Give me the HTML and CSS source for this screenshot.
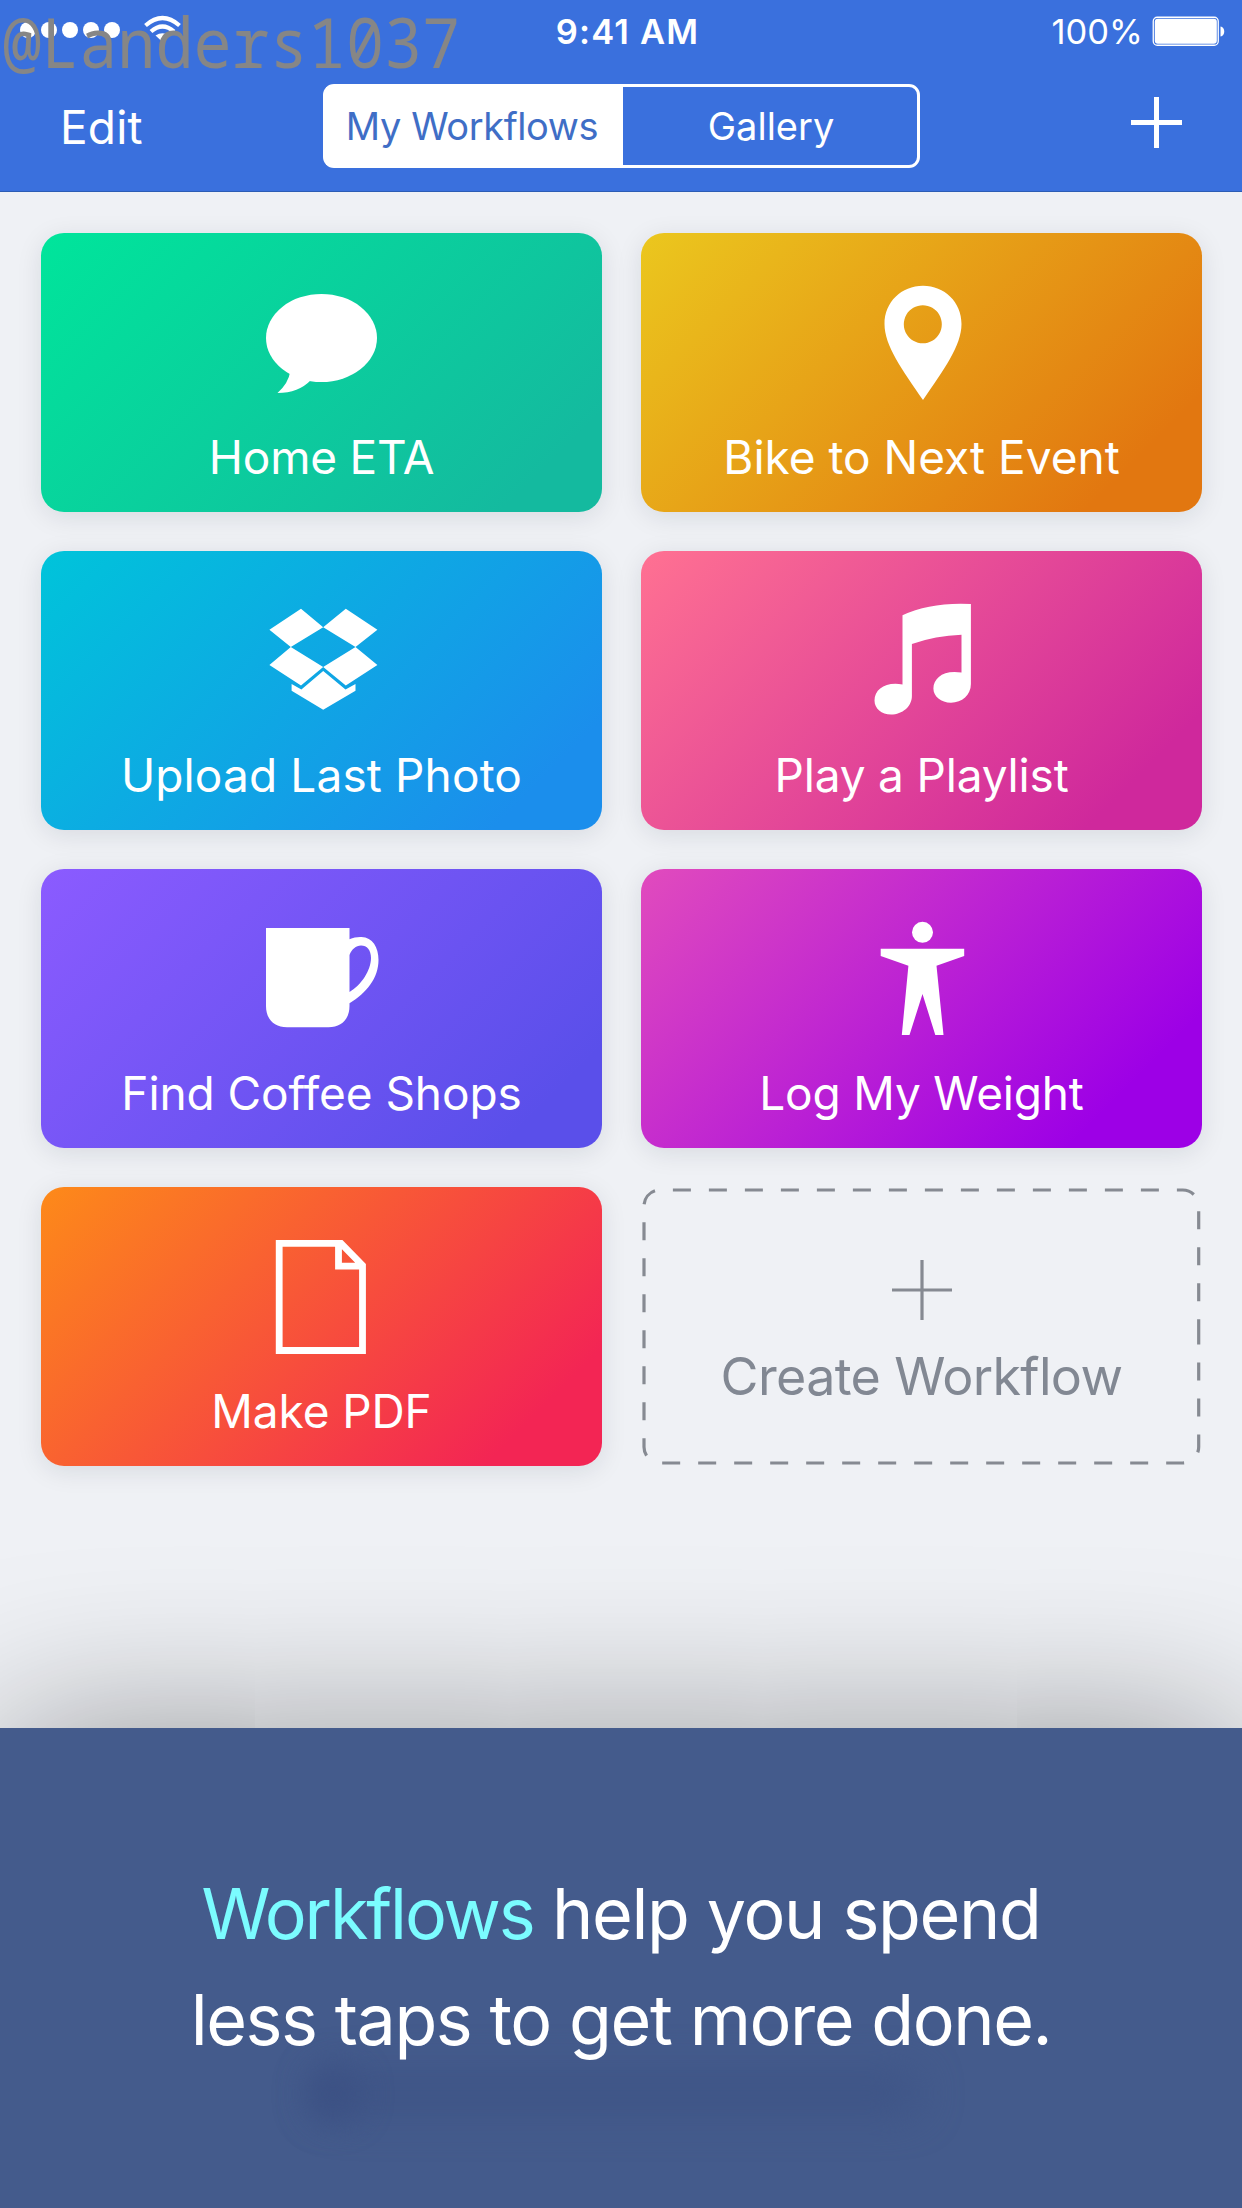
FILE: index.html
```html
<!DOCTYPE html>
<html lang="en">
<head>
<meta charset="utf-8">
<title>My Workflows</title>
<link rel="stylesheet" href="styles.css">
</head>
<body>
<div class="screen">
  <header class="header">
    <div class="status">
      <svg class="signal" viewBox="0 0 200 62" width="200" height="62">
        <g fill="#fff">
          <circle cx="28" cy="30" r="8"/><circle cx="49" cy="30" r="8"/><circle cx="70" cy="30" r="8"/><circle cx="91" cy="30" r="8"/><circle cx="112" cy="30" r="8"/>
          <path d="M162.500 42 L155.500 35.500 Q162.500 31 169.500 35.500 Z"/>
        </g>
        <g fill="none" stroke="#fff" stroke-width="4.200">
          <path d="M145.500 25.500 Q162.500 10.500 179.500 25.500"/>
          <path d="M151 31.500 Q162.500 21.500 174 31.500"/>
        </g>
      </svg>
      <span class="time">9:41 AM</span>
      <div class="power">
        <span class="percent">100%</span>
        <svg viewBox="0 0 75 31" width="75" height="31">
          <rect x="1.250" y="1.250" width="65" height="28" rx="4" fill="none" stroke="#fff" stroke-width="1.300"/>
          <rect x="2.800" y="2.800" width="62" height="25" rx="3" fill="#fff"/>
          <path d="M68.500 10.500 C73.500 11 73.500 20 68.500 20.500 Z" fill="#fff"/>
        </svg>
      </div>
    </div>
    <nav class="nav">
      <span class="edit">Edit</span>
      <div class="segments">
        <span class="segment selected">My Workflows</span>
        <span class="segment gallery">Gallery</span>
      </div>
      <svg class="add" viewBox="0 0 51 51" width="51" height="51"><path d="M0 25.500H51M25.500 0V51" stroke="#fff" stroke-width="5"/></svg>
    </nav>
    <div class="handle">@Landers1037</div>
  </header>

  <main class="grid">
    <div class="card green">
      <svg class="icon" viewBox="256.500 273 130 140">
        <ellipse cx="321" cy="338" rx="55.500" ry="44"/>
        <path d="M289.600 372 Q288 383 277 393 Q298 393 310.500 380 L306 370 Z"/>
      </svg>
      <span class="label home">Home ETA</span>
    </div>
    <div class="card amber">
      <svg class="icon" viewBox="856.500 273 130 140">
        <path fill-rule="evenodd" d="M922.500 285.700 C944 285.700 961 302 961 324 C961 346 943 370 922.500 400 C902 370 884 346 884 324 C884 302 901 285.700 922.500 285.700 Z M922.300 305.300 a19 19 0 1 0 .01 0 Z"/>
      </svg>
      <span class="label">Bike to Next Event</span>
    </div>
    <div class="card blue">
      <svg class="icon" viewBox="256.500 591 130 140">
        <path d="M268.900 629.700 L300.500 608.700 L322.700 627.300 L290.300 647 Z M345.300 608.700 L376.900 629.700 L355 647 L322.700 627.300 Z M290.300 647 L322.700 667 L300.500 685.500 L268.900 665 Z M355 647 L376.900 665 L345.300 685.500 L322.700 667 Z M291.100 684 L300.900 689.500 L322.700 671 L345 689.500 L355 684 V690.700 L322.700 709.700 L291.100 690.700 Z"/>
      </svg>
      <span class="label upload">Upload Last Photo</span>
    </div>
    <div class="card pink">
      <svg class="icon" viewBox="856.500 591 130 140">
        <path d="M902 615.300 Q930 602 970.400 604 V684 C970.400 695 961.500 702.700 950.500 702.700 C940.500 702.700 932.900 696.500 932.900 688.500 C932.900 678 943 669.500 961 672.500 V634.700 Q935 635.500 911.400 644 V696 C911.400 706.500 902 714.500 890.500 714.500 C881 714.500 874 708.500 874 700.500 C874 689 885.500 681.500 902 684.500 Z"/>
      </svg>
      <span class="label play">Play a Playlist</span>
    </div>
    <div class="card violet">
      <svg class="icon" viewBox="256.500 909 130 140">
        <path d="M265.500 928 H349 V939.300 C353 937.500 357 936.800 361 937 C372 937.500 378 947 378 960 C378 978 366 993 349 1003.300 V1006 C349 1019 341 1027.300 328 1027.300 H286.500 C273.500 1027.300 265.500 1019 265.500 1006 Z M349 955 V992 C361 985 370.500 970 370.500 958 C370.500 950 366.500 945.500 360.500 945.500 C355.500 945.500 351 949.500 349 955 Z"/>
      </svg>
      <span class="label find">Find Coffee Shops</span>
    </div>
    <div class="card purple">
      <svg class="icon" viewBox="856.500 909 130 140">
        <circle cx="922" cy="932.300" r="10.500"/>
        <path d="M880.200 948.700 H963.700 V956 L936 965.700 L943 1035 H934.800 L922 994 L909 1035 H901.300 L907.900 965.700 L880.200 956 Z"/>
      </svg>
      <span class="label play">Log My Weight</span>
    </div>
    <div class="card red">
      <svg class="icon outline" viewBox="256.500 1227 130 140">
        <path d="M278.700 1243.300 H340.500 L362 1265.500 V1350.500 H278.700 Z M338 1243.300 V1266.200 H362"/>
      </svg>
      <span class="label find">Make PDF</span>
    </div>
    <div class="create">
      <svg class="frame" viewBox="641 1187 561 279"><path d="M1198.700 1326.500 V1447 a16 16 0 0 1 -16 16 H660 a16 16 0 0 1 -16 -16 V1206 a16 16 0 0 1 16 -16 H1182.700 a16 16 0 0 1 16 16 Z"/></svg>
      <svg class="plus" viewBox="0 0 60 60"><path d="M0 30H60M30 0V60"/></svg>
      <span class="create-label">Create Workflow</span>
    </div>
  </main>

  <section class="panel">
    <div class="smudge"></div>
    <div class="smudge spot"></div>
    <p class="message"><span class="accent">Workflows</span> help you spend<br><span class="second">less taps to get more done.</span></p>
  </section>
</div>
</body>
</html>
```
FILE: styles.css
```css
* { box-sizing: border-box; margin: 0; padding: 0; }

body {
  background: #eff1f5;
  font-family: Inter, "Liberation Sans", sans-serif;
  color: #fff;
}

svg { display: block; }

.screen {
  display: flex;
  flex-direction: column;
  width: 1242px;
  height: 2208px;
  overflow: hidden;
  background: #eff1f5;
}

.header {
  position: relative;
  flex: none;
  height: 192px;
  background: #3a70dd;
  border-bottom: 1px solid #2c5cb4;
}

.status {
  display: grid;
  grid-template-columns: 1fr auto 1fr;
  align-items: center;
  height: 62px;
  padding-right: 15px;
}

.time {
  padding-left: 28px;
  font-size: 34.5px;
  font-weight: 600;
  letter-spacing: 1.2px;
}

.power {
  display: flex;
  justify-content: flex-end;
  align-items: center;
  gap: 9px;
}

.percent {
  font-size: 34.5px;
  letter-spacing: 0;
}

.nav {
  display: grid;
  grid-template-columns: 1fr 597px 1fr;
  align-items: start;
  padding: 22px 60px 0;
}

.edit {
  padding-top: 15px;
  font-size: 46px;
  line-height: 56px;
  letter-spacing: 0.2px;
}

.segments {
  display: grid;
  grid-template-columns: 297px 1fr;
  height: 84px;
  border: 3px solid #fff;
  border-radius: 11px;
}

.segment {
  font-size: 38px;
  line-height: 78px;
  letter-spacing: -0.4px;
  text-align: center;
}

.selected {
  padding-right: 4px;
  background: #fff;
  color: #3f6ec6;
}

.gallery {
  padding-left: 3px;
  letter-spacing: 0;
}

.add {
  justify-self: end;
  margin-top: 13px;
}

.handle {
  position: absolute;
  left: 2px;
  top: -2px;
  padding: 0 4px 0 1px;
  font-family: "Noto Sans Mono", "DejaVu Sans Mono", monospace;
  font-size: 63.5px;
  line-height: 88px;
  color: #868686;
  transform: scaleY(1.08);
}

.grid {
  display: grid;
  grid-template-columns: 561px 561px;
  grid-auto-rows: 279px;
  gap: 39px;
  padding: 41px 0 0 41px;
}

.card {
  display: flex;
  flex-direction: column;
  align-items: center;
  padding-top: 40px;
  border-radius: 23px;
  box-shadow: 0 5px 26px rgba(20, 30, 50, 0.1);
}

.green { background: linear-gradient(135deg, #00e59b, #14ba9f 88%); }
.amber { background: linear-gradient(135deg, #ebc71e, #e27710 86%); }
.blue { background: linear-gradient(135deg, #00c4da, #1b8eec 87%); }
.pink { background: linear-gradient(135deg, #ff7192, #cf289c 86%); }
.violet { background: linear-gradient(135deg, #8b5bff, #5a4fea 88%); }
.purple { background: linear-gradient(135deg, #e14bbd, #9d00e6 84%); }
.red { background: linear-gradient(135deg, #fd8a19, #f32554 86%); }

.icon {
  width: 130px;
  height: 140px;
  fill: #fff;
}

.outline {
  fill: none;
  stroke: #fff;
  stroke-width: 6.8;
}

.label {
  margin-top: 16px;
  font-size: 46px;
  line-height: 56px;
}

.home { letter-spacing: -0.2px; }
.upload { letter-spacing: 0.13px; }
.play { letter-spacing: -0.17px; }
.find { letter-spacing: -0.1px; }

.create {
  position: relative;
  display: flex;
  flex-direction: column;
  align-items: center;
  padding-top: 73px;
  color: #828893;
}

.frame {
  position: absolute;
  inset: 0;
  fill: none;
  stroke: #868a92;
  stroke-width: 3.2;
  stroke-dasharray: 18 18;
}

.plus {
  width: 60px;
  height: 60px;
  stroke: #868a92;
  stroke-width: 3.2;
}

.create-label {
  margin-top: 25px;
  font-size: 52px;
  line-height: 64px;
  letter-spacing: -0.65px;
}

.panel {
  position: relative;
  height: 480px;
  margin-top: auto;
  padding-top: 133px;
  background: #445b8c;
  box-shadow: 0 0 165px rgba(0, 0, 0, 0.37);
}

.message {
  position: relative;
  font-size: 70px;
  line-height: 106px;
  letter-spacing: -1.35px;
  text-align: center;
}

.accent {
  color: #7bfcff;
  letter-spacing: -2.1px;
}

.second { letter-spacing: -1.45px; }

.smudge {
  position: absolute;
  left: 320px;
  top: 345px;
  width: 600px;
  height: 40px;
  border-radius: 20px;
  background: #3e5486;
  filter: blur(20px);
}

.spot {
  left: 305px;
  top: 338px;
  width: 56px;
  height: 56px;
  border-radius: 50%;
  background: #3c5184;
  filter: blur(15px);
}
```
